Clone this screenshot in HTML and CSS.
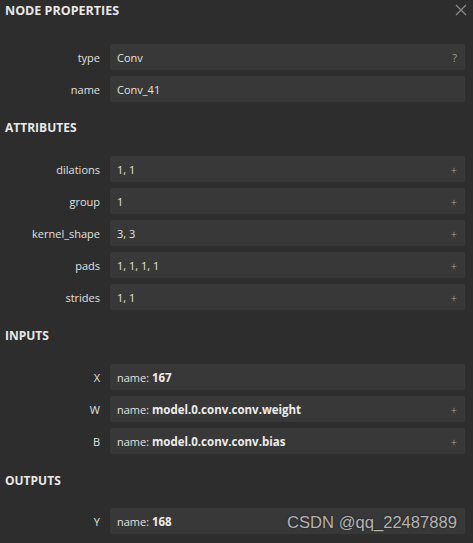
FILE: index.html
```html
<!DOCTYPE html>
<html>
<head>
<meta charset="utf-8">
<link rel="stylesheet" href="styles.css">
</head>
<body>
<div class="panel">
  <div class="title-bar">
    <span class="title">NODE PROPERTIES</span>
    <svg class="close" width="12" height="12" viewBox="0 0 12 12"><path d="M1 1 L11 11 M11 1 L1 11" stroke="#8a8a8a" stroke-width="1.3" fill="none"/></svg>
  </div>

  <div class="rows first">
    <div class="row"><div class="label">type</div><div class="value"><span>Conv</span><span class="btn">?</span></div></div>
    <div class="row"><div class="label">name</div><div class="value"><span>Conv_41</span></div></div>
  </div>

  <div class="header">ATTRIBUTES</div>
  <div class="rows">
    <div class="row"><div class="label">dilations</div><div class="value"><span>1, 1</span><span class="btn">+</span></div></div>
    <div class="row"><div class="label">group</div><div class="value"><span>1</span><span class="btn">+</span></div></div>
    <div class="row"><div class="label">kernel_shape</div><div class="value"><span>3, 3</span><span class="btn">+</span></div></div>
    <div class="row"><div class="label">pads</div><div class="value"><span>1, 1, 1, 1</span><span class="btn">+</span></div></div>
    <div class="row"><div class="label">strides</div><div class="value"><span>1, 1</span><span class="btn">+</span></div></div>
  </div>

  <div class="header">INPUTS</div>
  <div class="rows">
    <div class="row"><div class="label">X</div><div class="value"><span>name: <b>167</b></span></div></div>
    <div class="row"><div class="label">W</div><div class="value"><span>name: <b>model.0.conv.conv.weight</b></span><span class="btn">+</span></div></div>
    <div class="row"><div class="label">B</div><div class="value"><span>name: <b>model.0.conv.conv.bias</b></span><span class="btn">+</span></div></div>
  </div>

  <div class="header out">OUTPUTS</div>
  <div class="rows">
    <div class="row"><div class="label">Y</div><div class="value"><span>name: <b>168</b></span></div></div>
  </div>
</div>
<div class="watermark">CSDN @qq_22487889</div>
</body>
</html>
```

FILE: styles.css
```css
html, body {
  margin: 0;
  padding: 0;
  background: #2d2d2d;
  height: 100%;
  overflow: hidden;
}
body {
  font-family: "Open Sans", "Noto Sans", sans-serif;
  font-size: 11px;
  color: #e0e0e0;
}
.panel {
  padding: 0 8px 0 5px;
}
.title-bar {
  height: 20px;
  display: flex;
  align-items: center;
  justify-content: space-between;
}
.title {
  font-weight: bold;
  color: #e8e8e8;
  font-size: 12.5px;
}
.close {
  margin-right: -2px;
  margin-top: -1px;
}
.rows {
  display: flex;
  flex-direction: column;
  gap: 6px;
}
.rows.first {
  margin-top: 24px;
}
.header {
  font-weight: bold;
  font-size: 12px;
  color: #e8e8e8;
  height: 20px;
  line-height: 20px;
  margin-top: 16px;
  margin-bottom: 18px;
}
.header.out {
  margin-top: 17px;
  margin-bottom: 17px;
}
.row {
  display: grid;
  grid-template-columns: 95px 1fr;
  column-gap: 10px;
  align-items: center;
}
.label {
  text-align: right;
  color: #e0e0e0;
}
.value {
  height: 26px;
  background: #383838;
  border-radius: 2px;
  display: flex;
  align-items: center;
  justify-content: space-between;
  padding: 0 8px 0 7px;
  color: #e2e2e2;
}
.value b {
  font-weight: bold;
  font-size: 11.5px;
  color: #ececec;
}
.btn {
  color: #9a9a9a;
  font-size: 11px;
}
.watermark {
  position: absolute;
  left: 287px;
  top: 513px;
  font-family: "Liberation Sans", sans-serif;
  font-size: 16.6px;
  color: #b4b4b4;
  text-shadow: 0 0 2px #1a1a1a;
}
```
